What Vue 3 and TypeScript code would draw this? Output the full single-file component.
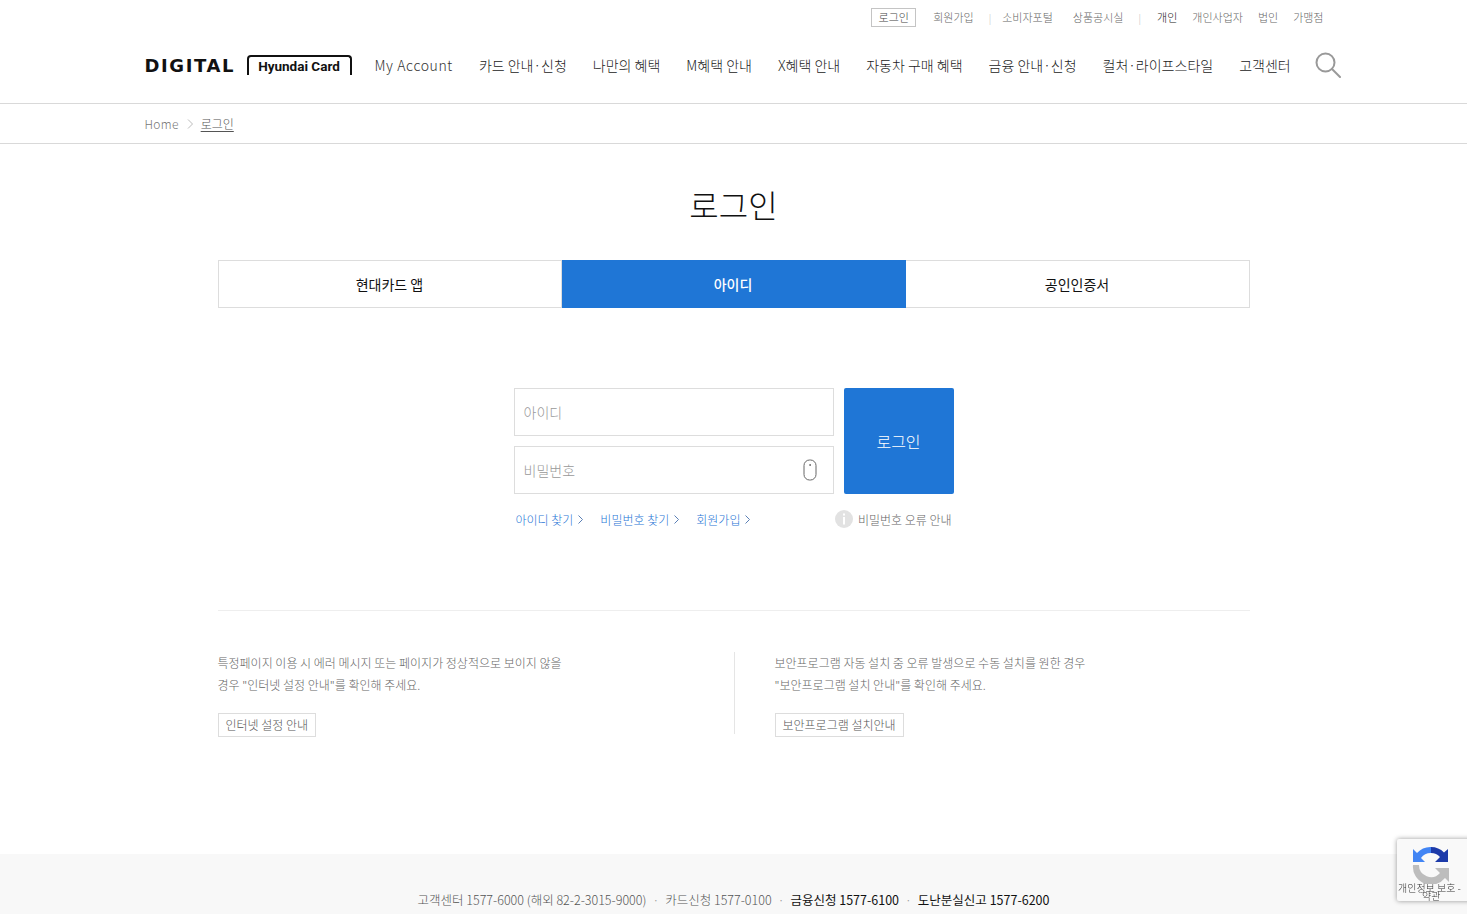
<script setup lang="ts">
const topLinks = [
  { label: '회원가입', cls: 'w-a' },
  { label: '|', cls: 'sep' },
  { label: '소비자포털', cls: 'w-b' },
  { label: '상품공시실', cls: 'w-c' },
  { label: '|', cls: 'sep' },
  { label: '개인', cls: 'dark' },
  { label: '개인사업자', cls: '' },
  { label: '법인', cls: '' },
  { label: '가맹점', cls: '' },
]
const navItems = ['My Account', '카드 안내·신청', '나만의 혜택', 'M혜택 안내', 'X혜택 안내', '자동차 구매 혜택', '금융 안내·신청', '컬처·라이프스타일', '고객센터']
const tabs = ['현대카드 앱', '아이디', '공인인증서']
const helpLinks = ['아이디 찾기', '비밀번호 찾기', '회원가입']
</script>

<template>
  <div class="page">
    <header class="header">
      <div class="wrap">
        <div class="top-links">
          <a class="login-chip">로그인</a>
          <a v-for="(item, i) in topLinks" :key="i" class="top-link" :class="item.cls">{{ item.label }}</a>
        </div>
        <div class="main-row">
          <div class="logo">
            <span class="logo-digital">DIGITAL</span>
            <span class="logo-card">Hyundai Card</span>
          </div>
          <nav class="nav">
            <a v-for="item in navItems" :key="item" class="nav-item">{{ item }}</a>
          </nav>
          <svg class="search" width="26" height="26" viewBox="0 0 26 26" fill="none" stroke="#999" stroke-width="2">
            <circle cx="10.5" cy="10.5" r="9" />
            <path d="M17 17l8 8" stroke-linecap="round" />
          </svg>
        </div>
      </div>
    </header>

    <div class="crumbs">
      <div class="wrap crumb-row">
        <span class="crumb-home">Home</span>
        <svg width="6" height="10" viewBox="0 0 6 10" fill="none" stroke="#bbb"><path d="M1 .5 5.5 5 1 9.5" /></svg>
        <span class="crumb-now">로그인</span>
      </div>
    </div>

    <main class="content">
      <h1 class="title">로그인</h1>

      <div class="tabs">
        <button v-for="(tab, i) in tabs" :key="tab" class="tab" :class="{ active: i === 1 }">{{ tab }}</button>
      </div>

      <div class="form">
        <div class="form-row">
          <div class="fields">
            <div class="field"><span class="ph">아이디</span></div>
            <div class="field">
              <span class="ph">비밀번호</span>
              <svg width="14" height="22" viewBox="0 0 14 22" fill="none">
                <rect x="1" y="1" width="12" height="20" rx="5.5" stroke="#666" />
                <rect x="6.5" y="5" width="1.2" height="2" fill="#555" />
              </svg>
            </div>
          </div>
          <button class="login-btn">로그인</button>
        </div>
        <div class="help-row">
          <div class="help-links">
            <a v-for="link in helpLinks" :key="link" class="help-link">
              {{ link }}
              <svg width="5" height="9" viewBox="0 0 5 9" fill="none" stroke="#5a7fb5"><path d="M.5.5 4.5 4.5 .5 8.5" /></svg>
            </a>
          </div>
          <div class="pw-info">
            <span class="info-icon">
              <svg width="18" height="18" viewBox="0 0 18 18">
                <circle cx="9" cy="9" r="9" fill="#e2e2e2" />
                <rect x="8" y="3.5" width="2" height="2" fill="#fff" />
                <rect x="8" y="7" width="2" height="7.5" fill="#fff" />
              </svg>
            </span>
            <span>비밀번호 오류 안내</span>
          </div>
        </div>
      </div>

      <div class="notes">
        <section class="note">
          <p>특정페이지 이용 시 에러 메시지 또는 페이지가 정상적으로 보이지 않을<br />경우 "인터넷 설정 안내"를 확인해 주세요.</p>
          <a class="note-btn">인터넷 설정 안내</a>
        </section>
        <section class="note note-right">
          <p>보안프로그램 자동 설치 중 오류 발생으로 수동 설치를 원한 경우<br />"보안프로그램 설치 안내"를 확인해 주세요.</p>
          <a class="note-btn">보안프로그램 설치안내</a>
        </section>
      </div>
    </main>

    <footer class="footer">
      <span class="muted">고객센터 1577-6000 (해외 82-2-3015-9000)</span>
      <i class="dot">·</i>
      <span class="muted">카드신청 1577-0100</span>
      <i class="dot">·</i>
      <span class="strong">금융신청 1577-6100</span>
      <i class="dot">·</i>
      <span class="strong">도난분실신고 1577-6200</span>
    </footer>

    <aside class="recaptcha">
      <svg width="38" height="38" viewBox="0 0 38 38">
        <path d="M19 1a18 18 0 0 1 13 5.5L36 3v13H23l5-5a12 12 0 0 0-9-4z" fill="#1c3aa9" />
        <path d="M19 1v6a12 12 0 0 0-10 5l4 4H1V3l4 4A18 18 0 0 1 19 1z" fill="#4285f4" />
        <path d="M1 19h6a12 12 0 0 0 21 8l-5-5h14v14l-4-4A18 18 0 0 1 1 19z" fill="#bdbdbd" />
      </svg>
      <span class="rc-line">개인정보 보호 -</span>
      <span class="rc-terms">약관</span>
    </aside>
  </div>
</template>

<style>
html,
body {
  margin: 0;
  overflow: hidden;
  background: #fff;
}
</style>

<style scoped>
.page {
  height: 914px;
  overflow: hidden;
  font-family: "Noto Sans CJK KR", "Noto Sans", sans-serif;
  font-weight: 300;
  color: #333;
}
.wrap {
  width: 1180px;
  margin: 0 auto;
  padding-left: 1px;
  box-sizing: border-box;
}
.header {
  height: 103px;
  border-bottom: 1px solid #d9d9d9;
}
.top-links {
  display: flex;
  justify-content: flex-end;
  align-items: center;
  height: 19px;
  padding-top: 8px;
  font-size: 11px;
  color: #666;
}
.login-chip {
  box-sizing: border-box;
  width: 45px;
  height: 19px;
  margin-right: 17px;
  border: 1px solid #c4c4c4;
  text-align: center;
  line-height: 16px;
  color: #444;
}
.top-link {
  margin-left: 15px;
  line-height: 19px;
}
.w-a {
  margin-left: 0;
}
.sep {
  margin-left: 15px;
  color: #bbb;
  font-size: 10px;
}
.sep + .w-b {
  margin-left: 11px;
}
.w-c {
  margin-left: 20px;
}
.sep + .dark {
  margin-left: 16px;
}
.dark {
  color: #222;
}
.main-row {
  display: flex;
  align-items: center;
  height: 32px;
  margin-top: 22px;
}
.logo {
  display: flex;
  align-items: center;
  width: 230px;
  flex: none;
}
.logo-digital {
  width: 102px;
  font-family: "DejaVu Sans", sans-serif;
  font-size: 18px;
  font-weight: 700;
  letter-spacing: 1.6px;
  color: #111;
  white-space: nowrap;
}
.logo-card {
  box-sizing: border-box;
  width: 105px;
  height: 20px;
  border: 2px solid #111;
  border-bottom: 0;
  border-radius: 4px 4px 0 0;
  font-family: "Roboto", sans-serif;
  font-size: 13.5px;
  font-weight: 700;
  line-height: 19px;
  text-align: center;
  color: #111;
  white-space: nowrap;
}
.nav {
  display: flex;
  gap: 26px;
  font-size: 14px;
  color: #222;
  white-space: nowrap;
}
.nav-item {
  line-height: 20px;
}
.nav-item:first-child {
  letter-spacing: 0.6px;
  color: #333;
}
.search {
  margin-left: 24px;
  flex: none;
}
.crumbs {
  height: 39px;
  border-bottom: 1px solid #d9d9d9;
}
.crumb-row {
  display: flex;
  align-items: center;
  gap: 8px;
  height: 39px;
  font-size: 12px;
  color: #777;
}
.crumb-home {
  letter-spacing: 0.3px;
}
.crumb-now {
  color: #555;
  text-decoration: underline;
  text-underline-offset: 2px;
}
.content {
  width: 1032px;
  margin: 0 auto;
}
.title {
  margin: 0;
  padding-top: 38px;
  height: 78px;
  font-size: 32px;
  font-weight: 300;
  line-height: 44px;
  text-align: center;
  color: #111;
}
.tabs {
  display: grid;
  grid-template-columns: 344px 344px 344px;
  height: 48px;
}
.tab {
  padding: 0;
  border: 1px solid #ddd;
  border-left: 0;
  background: #fff;
  font: inherit;
  font-size: 14px;
  font-weight: 400;
  color: #111;
}
.tab:first-child {
  border-left: 1px solid #ddd;
}
.tab.active {
  border-color: #1f76d6;
  background: #1f76d6;
  color: #fff;
  font-weight: 500;
}
.form {
  width: 440px;
  margin: 80px auto 0;
}
.form-row {
  display: flex;
  gap: 10px;
}
.fields {
  display: flex;
  flex-direction: column;
  gap: 10px;
  width: 320px;
}
.field {
  display: flex;
  align-items: center;
  justify-content: space-between;
  box-sizing: border-box;
  height: 48px;
  padding: 0 16px 0 9px;
  border: 1px solid #ddd;
}
.ph {
  font-size: 14px;
  color: #999;
}
.login-btn {
  width: 110px;
  padding: 0;
  border: 0;
  border-radius: 2px;
  background: #1f76d6;
  font: inherit;
  font-size: 16px;
  color: #fff;
}
.help-row {
  display: flex;
  align-items: center;
  justify-content: space-between;
  height: 18px;
  margin-top: 16px;
  padding: 0 2px;
  font-size: 12px;
}
.help-links {
  display: flex;
  gap: 17px;
}
.help-link {
  display: flex;
  align-items: center;
  gap: 5px;
  color: #1f76d6;
  white-space: nowrap;
}
.pw-info {
  display: flex;
  align-items: center;
  gap: 5px;
  color: #666;
}
.info-icon {
  display: flex;
}
.notes {
  display: flex;
  margin-top: 82px;
  padding-top: 41px;
  border-top: 1px solid #eee;
}
.note {
  box-sizing: border-box;
  width: 516px;
  height: 82px;
  font-size: 12px;
  color: #666;
}
.note-right {
  padding-left: 40px;
  border-left: 1px solid #e5e5e5;
}
.note p {
  margin: 0 0 17px;
  line-height: 22px;
}
.note-btn {
  display: inline-block;
  box-sizing: border-box;
  height: 24px;
  padding: 0 7px;
  border: 1px solid #ddd;
  line-height: 21px;
  font-size: 12px;
  color: #555;
}
.footer {
  display: flex;
  justify-content: center;
  gap: 6px;
  height: 60px;
  margin-top: 120px;
  padding-top: 36px;
  background: #f8f8f8;
  font-size: 12.5px;
  line-height: 20px;
  white-space: nowrap;
}
.muted {
  color: #555;
}
.strong {
  color: #111;
  font-weight: 400;
}
.dot {
  font-style: normal;
  color: #999;
}
.recaptcha {
  position: fixed;
  top: 839px;
  left: 1397px;
  box-sizing: border-box;
  width: 256px;
  height: 62px;
  border-radius: 2px;
  background: #f9f9f9;
  box-shadow: 0 0 5px rgba(0, 0, 0, 0.4);
  font-size: 10px;
  color: #333;
}
.recaptcha svg {
  position: absolute;
  top: 7px;
  left: 15px;
}
.rc-line {
  position: absolute;
  top: 41px;
  left: 1px;
  white-space: nowrap;
}
.rc-terms {
  position: absolute;
  top: 49px;
  left: 25px;
}
</style>
